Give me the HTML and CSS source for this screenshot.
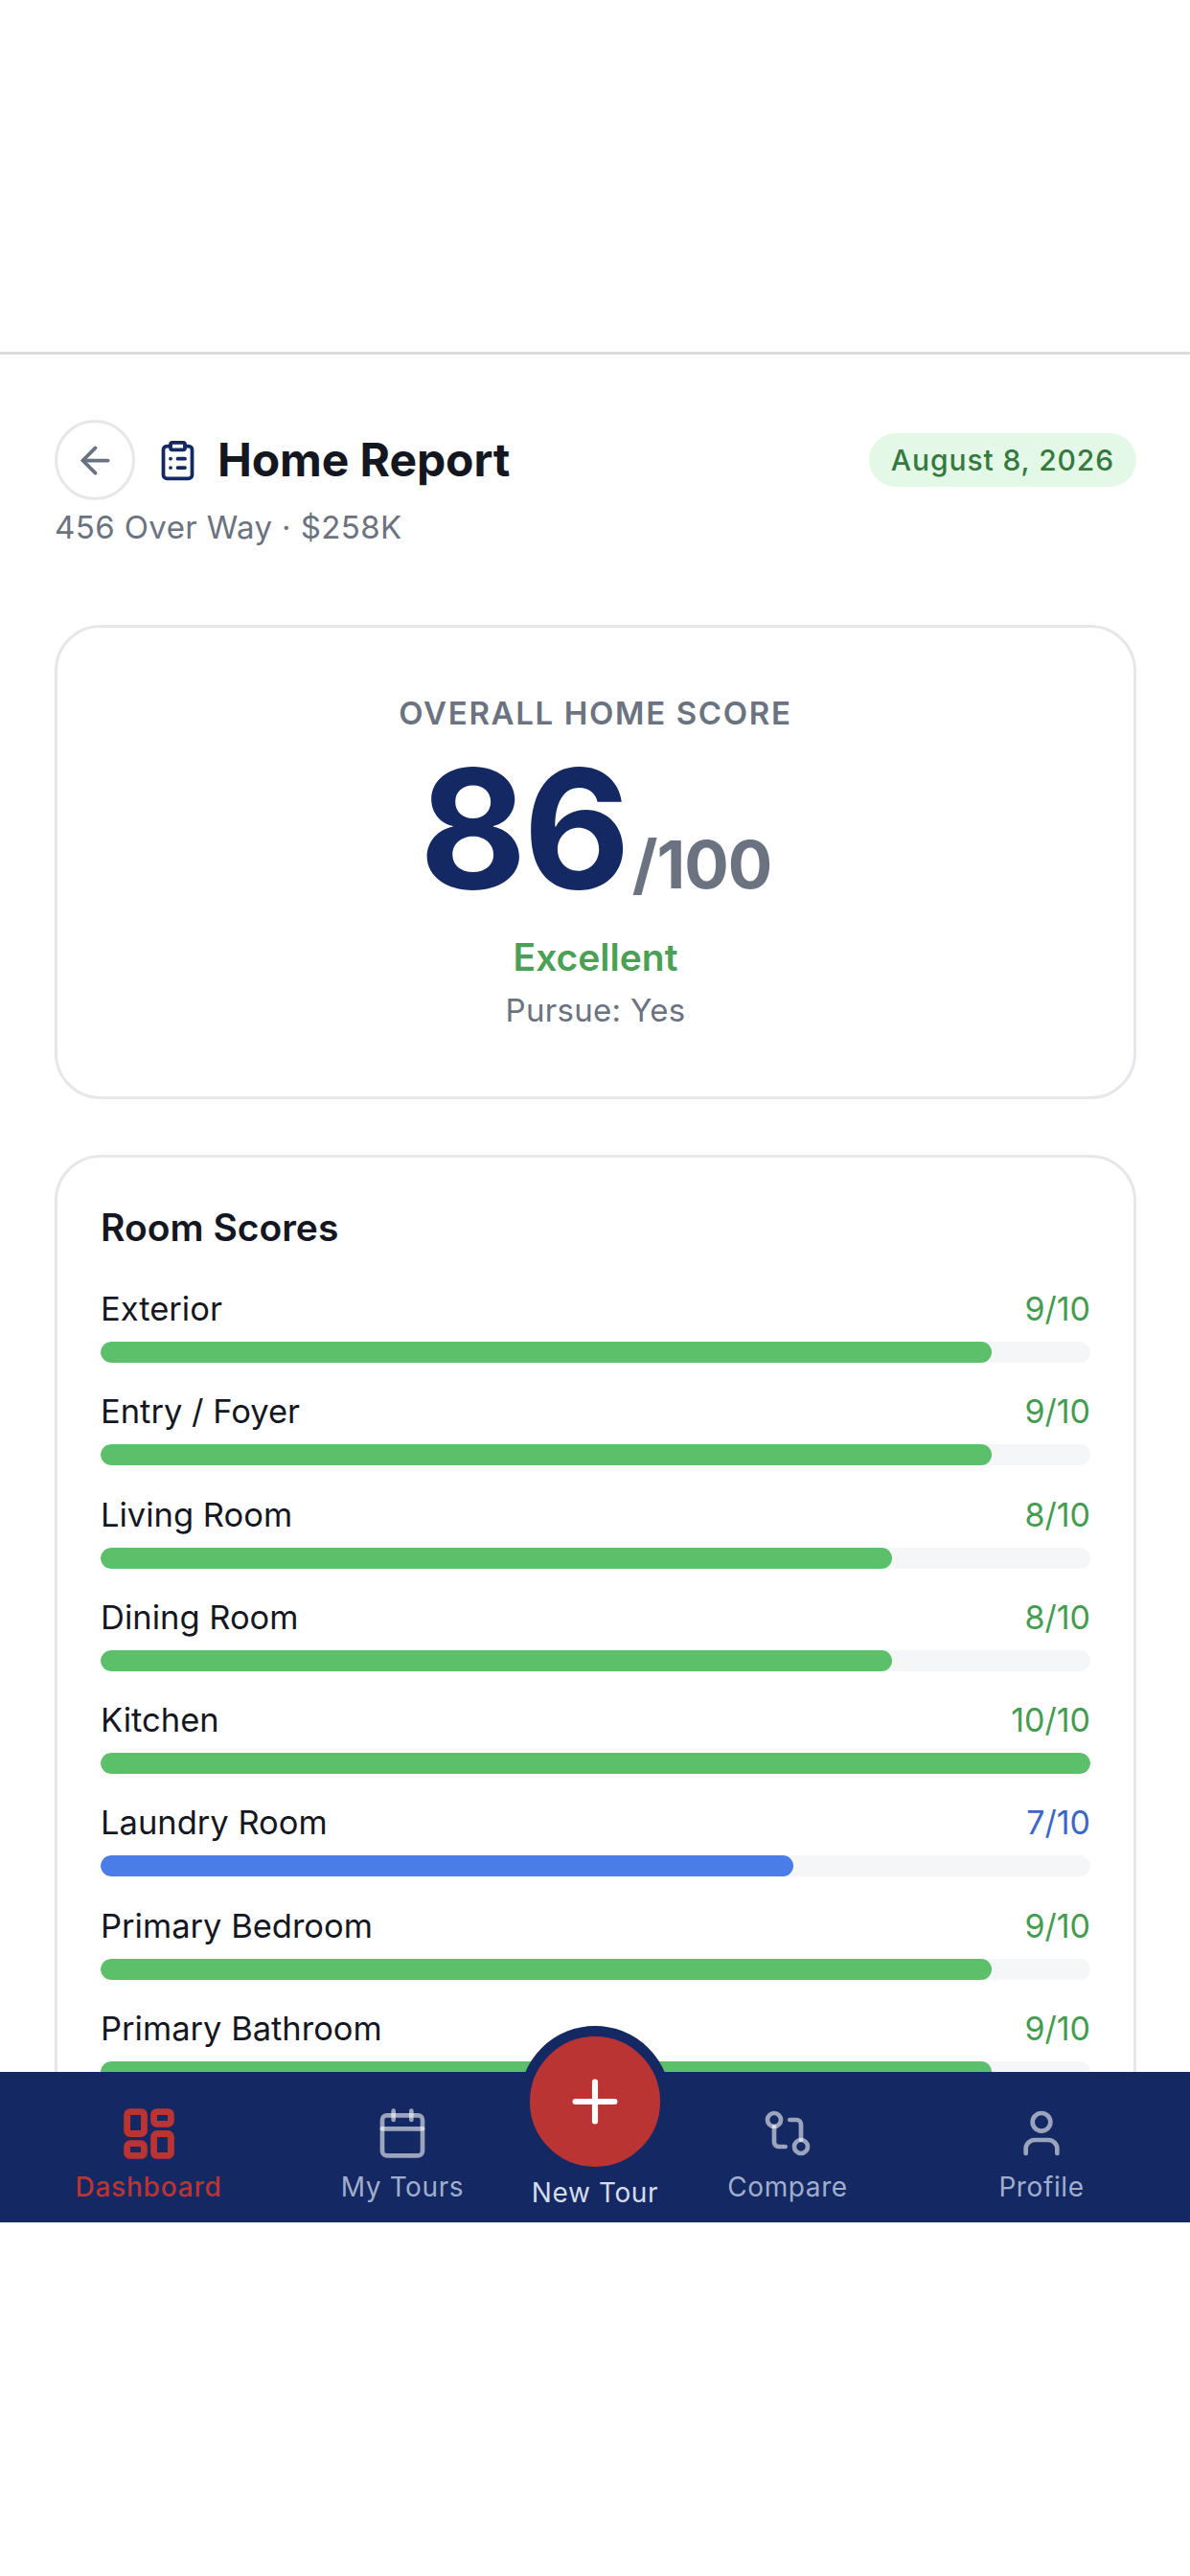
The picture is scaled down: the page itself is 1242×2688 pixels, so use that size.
FILE: index.html
```html
<!DOCTYPE html>
<html lang="en">
<head>
<meta charset="utf-8">
<title>Home Report</title>
<link rel="stylesheet" href="styles.css">
</head>
<body>
<div class="app">
  <div class="status-space"></div>
  <main class="main">
    <header class="header">
      <div class="header-left">
        <button class="back" aria-label="Back">
          <svg class="back-icon" viewBox="0 0 24 24"><path d="M19 12H5"/><path d="M12 19l-7-7 7-7"/></svg>
        </button>
        <svg class="title-icon" viewBox="0 0 24 24"><rect x="8" y="2" width="8" height="4" rx="1"/><path d="M16 4h2a2 2 0 0 1 2 2v14a2 2 0 0 1-2 2H6a2 2 0 0 1-2-2V6a2 2 0 0 1 2-2h2"/><path d="M12 11h4"/><path d="M12 16h4"/><path d="M8 11h.01"/><path d="M8 16h.01"/></svg>
        <h1 class="title">Home Report</h1>
      </div>
      <span class="date-pill">August 8, 2026</span>
    </header>
    <p class="subtitle">456 Over Way · $258K</p>

    <section class="card score-card">
      <div class="score-label">OVERALL HOME SCORE</div>
      <div class="score-value"><span class="score-num">86</span><span class="score-max">/100</span></div>
      <div class="score-rating">Excellent</div>
      <div class="score-pursue">Pursue: Yes</div>
    </section>

    <section class="card rooms-card">
      <h2 class="rooms-title">Room Scores</h2>
      <div class="room"><div class="room-head"><span>Exterior</span><span class="val green">9/10</span></div><div class="track"><div class="fill green-bg" style="width:90%"></div></div></div>
      <div class="room"><div class="room-head"><span>Entry / Foyer</span><span class="val green">9/10</span></div><div class="track"><div class="fill green-bg" style="width:90%"></div></div></div>
      <div class="room"><div class="room-head"><span>Living Room</span><span class="val green">8/10</span></div><div class="track"><div class="fill green-bg" style="width:80%"></div></div></div>
      <div class="room"><div class="room-head"><span>Dining Room</span><span class="val green">8/10</span></div><div class="track"><div class="fill green-bg" style="width:80%"></div></div></div>
      <div class="room"><div class="room-head"><span>Kitchen</span><span class="val green">10/10</span></div><div class="track"><div class="fill green-bg" style="width:100%"></div></div></div>
      <div class="room"><div class="room-head"><span>Laundry Room</span><span class="val blue">7/10</span></div><div class="track"><div class="fill blue-bg" style="width:70%"></div></div></div>
      <div class="room"><div class="room-head"><span>Primary Bedroom</span><span class="val green">9/10</span></div><div class="track"><div class="fill green-bg" style="width:90%"></div></div></div>
      <div class="room"><div class="room-head"><span>Primary Bathroom</span><span class="val green">9/10</span></div><div class="track"><div class="fill green-bg" style="width:90%"></div></div></div>
    </section>
  </main>

  <nav class="nav">
    <a class="nav-item active">
      <span class="nav-slot"><svg class="icon-dash" viewBox="0 0 24 24"><rect x="3" y="3" width="7" height="9" rx="1.2"/><rect x="14" y="3" width="7" height="5" rx="1.2"/><rect x="14" y="12" width="7" height="9" rx="1.2"/><rect x="3" y="16" width="7" height="5" rx="1.2"/></svg></span>
      <span class="nav-label">Dashboard</span>
    </a>
    <a class="nav-item">
      <span class="nav-slot"><svg class="nav-icon" viewBox="0 0 24 24"><path d="M8 2v4"/><path d="M16 2v4"/><rect x="3" y="4" width="18" height="18" rx="2"/><path d="M3 10h18"/></svg></span>
      <span class="nav-label">My Tours</span>
    </a>
    <a class="nav-item fab-item">
      <span class="fab"><svg class="fab-icon" viewBox="0 0 24 24"><path d="M5 12h14"/><path d="M12 5v14"/></svg></span>
      <span class="nav-label fab-label">New Tour</span>
    </a>
    <a class="nav-item">
      <span class="nav-slot"><svg class="nav-icon" viewBox="0 0 24 24"><circle cx="18" cy="18" r="3"/><circle cx="6" cy="6" r="3"/><path d="M13 6h3a2 2 0 0 1 2 2v7"/><path d="M11 18H8a2 2 0 0 1-2-2V9"/></svg></span>
      <span class="nav-label">Compare</span>
    </a>
    <a class="nav-item">
      <span class="nav-slot"><svg class="nav-icon" viewBox="0 0 24 24"><path d="M19 21v-2a4 4 0 0 0-4-4H9a4 4 0 0 0-4 4v2"/><circle cx="12" cy="7" r="4"/></svg></span>
      <span class="nav-label">Profile</span>
    </a>
  </nav>
</div>
</body>
</html>
```
FILE: styles.css
```css
* { box-sizing: border-box; }
html, body { margin: 0; padding: 0; background: #fff; }
body { font-family: Inter, "Liberation Sans", sans-serif; color: #14171f; }
svg { fill: none; stroke-linecap: round; stroke-linejoin: round; stroke-width: 2; display: block; }

.app { height: 2319px; display: flex; flex-direction: column; overflow: visible; }
.status-space { height: 370px; flex: none; border-bottom: 3px solid #dcdcdc; }
.main { flex: 1; min-height: 0; overflow: hidden; padding: 68px 56px 0 57px; }

.header { display: flex; justify-content: space-between; align-items: center; }
.header-left { display: flex; align-items: center; }
.back { width: 84px; height: 84px; border-radius: 50%; border: 3px solid #e5e7eb; background: #fff; padding: 0; display: flex; align-items: center; justify-content: center; }
.back-icon { width: 45px; height: 45px; stroke: #6b7280; }
.title-icon { width: 45px; height: 45px; stroke: #142863; margin-left: 22px; }
.title { margin: 0 0 0 19px; font-size: 48px; line-height: 56px; font-weight: 700; letter-spacing: -0.1px; color: #14171f; }
.date-pill { background: #e3f8e7; color: #35793f; border-radius: 28px; height: 56px; padding: 0 23px; display: flex; align-items: center; font-size: 30px; font-weight: 500; letter-spacing: 0.9px; }
.subtitle { margin: 7px 0 0; font-size: 33px; line-height: 42px; color: #6b7280; letter-spacing: 0.4px; }

.card { border: 3px solid #e5e7eb; border-radius: 48px; background: #fff; }
.score-card { margin-top: 81px; height: 495px; padding-top: 69px; text-align: center; }
.score-label { font-size: 33px; line-height: 40px; font-weight: 600; letter-spacing: 1.65px; color: #6b7280; }
.score-value { margin-top: 16px; display: flex; justify-content: center; align-items: baseline; height: 168px; line-height: 168px; }
.score-num { font-size: 172px; font-weight: 700; letter-spacing: -3.4px; color: #142863; }
.score-max { font-size: 69px; font-weight: 700; color: #6b7280; margin-left: 5px; letter-spacing: -1px; }
.score-rating { margin-top: 28px; font-size: 39px; line-height: 46px; font-weight: 600; color: #4aa156; }
.score-pursue { margin-top: 12px; font-size: 33px; line-height: 40px; color: #6b7280; letter-spacing: 0.3px; }

.rooms-card { margin-top: 58px; padding: 50px 45px 0; }
.rooms-title { margin: 0 0 42px; font-size: 39px; line-height: 46px; font-weight: 600; color: #14171f; }
.room { height: 107.3px; }
.room-head { display: flex; justify-content: space-between; font-size: 34.5px; line-height: 40px; color: #14171f; }
.val { font-size: 34px; }
.green { color: #439c50; }
.blue { color: #3d66c9; }
.track { margin-top: 14px; height: 22px; border-radius: 11px; background: #f5f6f8; overflow: hidden; }
.fill { height: 100%; border-radius: 11px; }
.green-bg { background: #5cbf6a; }
.blue-bg { background: #4a7de8; }

.nav { flex: none; height: 157px; background: #142863; display: grid; grid-template-columns: 310px 220px 182px 220px 310px; position: relative; }
.nav-item { display: flex; flex-direction: column; align-items: center; color: #a0aecb; stroke: rgba(255,255,255,.58); }
.nav-slot { height: 64px; margin-top: 32px; display: flex; align-items: center; justify-content: center; }
.nav-icon { width: 56px; height: 56px; }
.icon-dash { width: 61px; height: 61px; stroke: #bb3434; stroke-width: 2.7; }
.nav-label { margin-top: 6px; font-size: 28px; line-height: 36px; letter-spacing: 0.6px; white-space: nowrap; }
.active .nav-label { color: #bb3434; font-weight: 500; letter-spacing: 0.8px; }
.fab { position: absolute; left: 542px; top: -48px; width: 158px; height: 158px; border-radius: 50%; border: 11px solid #142863; background: #bb3434; display: flex; align-items: center; justify-content: center; }
.fab-icon { width: 70px; height: 70px; stroke: #fff; stroke-width: 2.1; }
.fab-label { margin-top: 108px; color: #d5dcea; }
```
